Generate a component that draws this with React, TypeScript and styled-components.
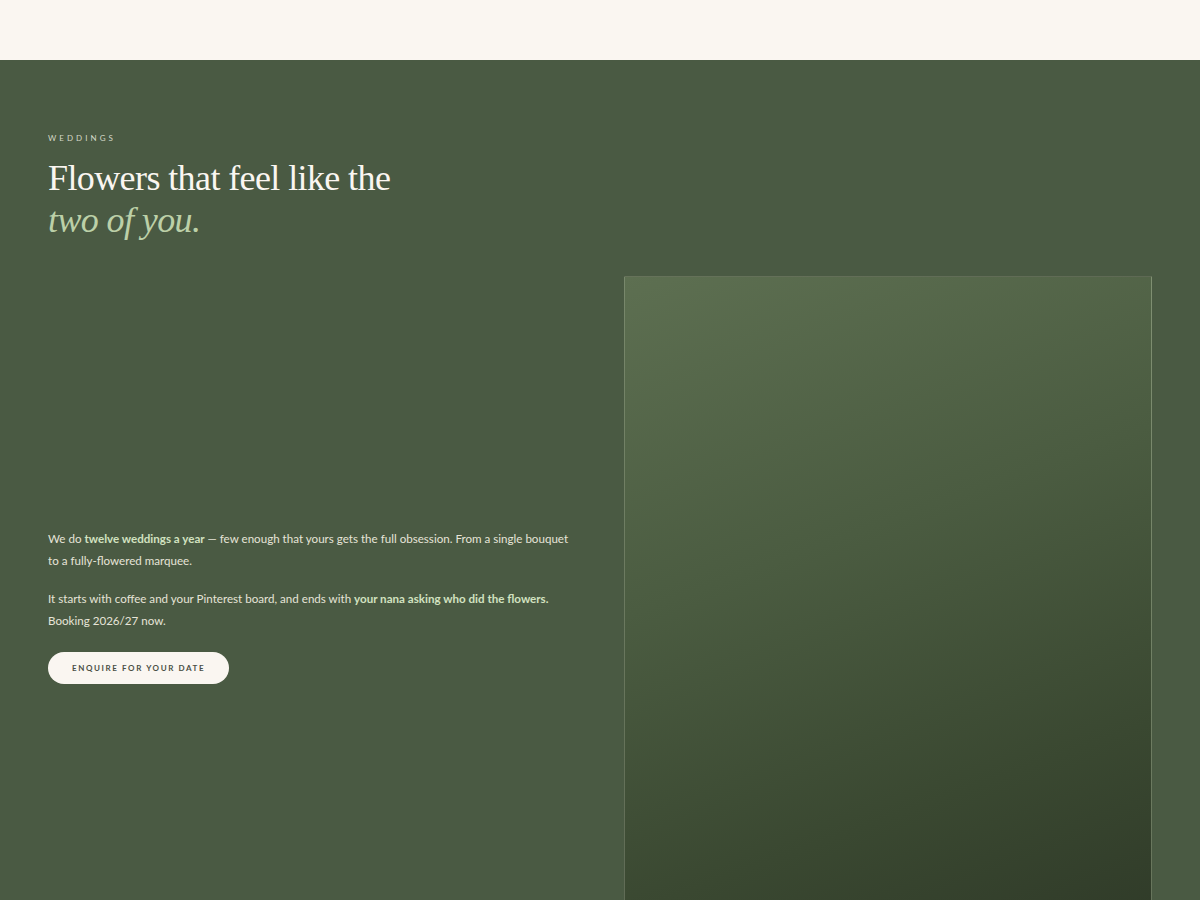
import styled, { createGlobalStyle } from "styled-components"

const GlobalStyle = createGlobalStyle`
  html, body {
    margin: 0;
    padding: 0;
    background: #4a5a43;
  }
  body {
    font-family: "Lato", "Noto Sans", sans-serif;
  }
  * {
    box-sizing: border-box;
  }
`

const TopBar = styled.header`
  height: 60px;
  background: #faf6f1;
`

const Section = styled.section`
  background: #4a5a43;
  padding: 73px 48px 0;
  min-height: 840px;
  overflow: hidden;
`

const Eyebrow = styled.div`
  font-size: 8px;
  letter-spacing: 0.38em;
  text-transform: uppercase;
  color: #d4d8c8;
  margin-bottom: 14px;
  font-weight: 400;
`

const Heading = styled.h2`
  margin: 0;
  font-family: "Liberation Serif", "DejaVu Serif", serif;
  font-weight: 400;
  font-size: 36px;
  line-height: 42px;
  letter-spacing: -0.6px;
  color: #faf6f1;
`

const Accent = styled.em`
  display: block;
  color: #bcd0a8;
  font-style: italic;
`

const Grid = styled.div`
  display: grid;
  grid-template-columns: 1fr 1fr;
  gap: 48px;
  align-items: center;
  margin-top: 35px;
`

const Copy = styled.div`
  display: flex;
  flex-direction: column;
  align-items: flex-start;
`

const Para = styled.p`
  margin: 0 0 16px;
  font-size: 11.6px;
  line-height: 22px;
  color: #e6e4d8;
`

const Strong = styled.strong`
  font-weight: 700;
  color: #d2e2c0;
`

const Button = styled.button`
  margin-top: 4px;
  height: 32px;
  padding: 0 24px;
  border: none;
  border-radius: 999px;
  background: #faf6f1;
  color: #4a4f45;
  font-family: "Lato", "Noto Sans", sans-serif;
  font-size: 8px;
  font-weight: 700;
  letter-spacing: 1.6px;
  text-transform: uppercase;
  cursor: pointer;
`

const Photo = styled.div`
  aspect-ratio: 4 / 5;
  width: 100%;
  background: linear-gradient(160deg, #5d6f51 0%, #4b5c41 40%, #3a4831 75%, #2f3a28 100%);
  border: 1px solid rgba(220, 230, 200, 0.28);
`

export default function App() {
  return (
    <>
      <GlobalStyle />
      <TopBar />
      <Section>
        <Eyebrow>Weddings</Eyebrow>
        <Heading>
          Flowers that feel like the
          <Accent>two of you.</Accent>
        </Heading>
        <Grid>
          <Copy>
            <Para>
              We do <Strong>twelve weddings a year</Strong> — few enough that yours gets the full
              obsession. From a single bouquet to a fully-flowered marquee.
            </Para>
            <Para>
              It starts with coffee and your Pinterest board, and ends with{" "}
              <Strong>your nana asking who did the flowers.</Strong> Booking 2026/27 now.
            </Para>
            <Button>Enquire for your date</Button>
          </Copy>
          <Photo />
        </Grid>
      </Section>
    </>
  )
}
